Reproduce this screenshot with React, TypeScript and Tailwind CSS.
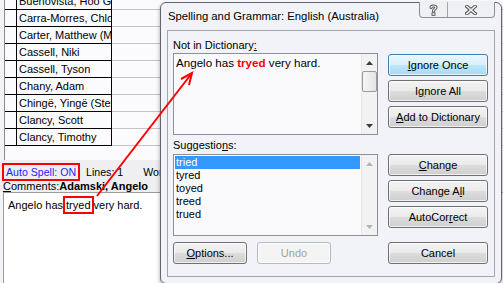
import type { ReactNode } from 'react';

const names = [
  'Buenovista, Hoo Geun',
  'Carra-Morres, Chloe',
  'Carter, Matthew (Matt)',
  'Cassell, Niki',
  'Cassell, Tyson',
  'Chany, Adam',
  'Chingë, Yingë (Stella)',
  'Clancy, Scott',
  'Clancy, Timothy',
];

const suggestions = ['tried', 'tyred', 'toyed', 'treed', 'trued'];

function NameGrid() {
  return (
    <div className="h-[160px] ml-[4px] border-l border-[#8c8c8c] bg-[#fbfbfe] overflow-hidden">
      <div className="-mt-[7px]">
        {names.map((n) => (
          <div key={n} className="flex h-[17px]">
            <div className="w-[12px] border-r border-b border-black" />
            <div className="w-[95px] border-r border-b border-black pl-[2px] leading-[16px] whitespace-nowrap overflow-hidden">
              {n}
            </div>
            <div className="flex-1 border-b border-[#c4c4c8]" />
          </div>
        ))}
      </div>
    </div>
  );
}

function MainWindow() {
  return (
    <div className="flex flex-col h-full">
      <NameGrid />
      <div className="h-[21px] bg-[#efeff2] flex items-start pt-[3px] pl-[2px] text-[10.6px] leading-[14px]">
        <span className="border-2 border-[#f00] px-[2px] text-[#2424ff]">Auto Spell: ON</span>
        <span className="ml-[6px] pt-[2px]">Lines: 1</span>
        <span className="ml-[20px] pt-[2px]">Words: 5</span>
      </div>
      <div className="h-[11px] bg-[#efeff2] pl-[3px] leading-[11px] whitespace-nowrap">
        <u className="underline-offset-1">C</u>omments:<b>Adamski, Angelo</b>
      </div>
      <div className="flex-1 ml-[3px] border-l border-t border-[#9c9c9c] bg-white pl-[4px] pt-[3px]">
        <div className="flex items-center whitespace-nowrap">
          Angelo has
          <span className="inline-block border-2 border-[#f00] px-[1px] py-[1px] leading-[12px]">tryed</span>
          very hard.
        </div>
      </div>
    </div>
  );
}

function ScrollBar({ thumb, disabled }: { thumb?: boolean; disabled?: boolean }) {
  const arrow = disabled ? '#b4b4b4' : '#3c3c3c';
  return (
    <div className="w-[16px] h-full border-l border-[#e6e6e6] bg-[#f2f2f3] flex flex-col">
      <div className="h-[17px] flex items-center justify-center">
        <svg width="7" height="4" viewBox="0 0 7 4">
          <path d="M0 4 L3.5 0 L7 4 Z" fill={arrow} />
        </svg>
      </div>
      {thumb && (
        <div className="h-[21px] w-[15px] border border-[#9a9a9a] rounded-[2px] bg-[linear-gradient(90deg,#f6f6f6,#e4e4e4)]" />
      )}
      <div className="flex-1" />
      <div className="h-[17px] flex items-center justify-center">
        <svg width="7" height="4" viewBox="0 0 7 4">
          <path d="M0 0 L3.5 4 L7 0 Z" fill={arrow} />
        </svg>
      </div>
    </div>
  );
}

function Btn({
  children,
  primary,
  disabled,
  wide,
}: {
  children: ReactNode;
  primary?: boolean;
  disabled?: boolean;
  wide?: boolean;
}) {
  let look =
    'border-[#707070] bg-[linear-gradient(#f3f3f3_0%,#ebebeb_48%,#dcdcdc_52%,#cfcfcf_100%)] text-black';
  if (primary)
    look =
      'border-[#3c7fb1] bg-[linear-gradient(#eaf6fd_0%,#d9f0fc_48%,#bee6fd_52%,#a7d9f5_100%)] text-black';
  if (disabled) look = 'border-[#b6b9bd] bg-[#f4f4f4] text-[#a2a2a2]';
  return (
    <div
      className={`${wide ? 'w-[100px]' : 'w-[74px]'} h-[22px] rounded-[3px] border shadow-[inset_0_0_0_1px_rgba(255,255,255,0.7)] flex items-center justify-center leading-[13px] ${look}`}
    >
      {children}
    </div>
  );
}

function HelpClose() {
  return (
    <div className="absolute right-[6px] top-[-1px] h-[16px] w-[76px] flex border border-t-0 border-[#8d8f94] rounded-b-[4px] bg-[#eef0f4]">
      <div className="w-[28px] border-r border-[#a2a5aa] flex items-center justify-center">
        <svg width="9" height="12" viewBox="0 0 9 12">
          <path
            d="M2 3.5 C2 1.5 7 1.5 7 3.5 C7 5 4.5 5.2 4.5 7.2"
            fill="none"
            stroke="#555"
            strokeWidth="3"
            strokeLinecap="round"
          />
          <path
            d="M2 3.5 C2 1.5 7 1.5 7 3.5 C7 5 4.5 5.2 4.5 7.2"
            fill="none"
            stroke="#eef0f4"
            strokeWidth="1.2"
            strokeLinecap="round"
          />
          <rect x="3" y="8.8" width="3" height="2.6" fill="#eef0f4" stroke="#555" strokeWidth="0.9" />
        </svg>
      </div>
      <div className="flex-1 flex items-center justify-center">
        <svg width="12" height="10" viewBox="0 0 12 10">
          <path d="M2 1.5 L10 8.5 M10 1.5 L2 8.5" stroke="#555" strokeWidth="3.6" strokeLinecap="square" />
          <path d="M2 1.5 L10 8.5 M10 1.5 L2 8.5" stroke="#eef0f4" strokeWidth="1.6" strokeLinecap="square" />
        </svg>
      </div>
    </div>
  );
}

function SpellingDialog() {
  return (
    <div className="absolute left-[160px] top-[2px] w-[342px] h-[282px] rounded-[6px] border border-[#646770] bg-[#f2f3f8] px-[6px] pb-[6px] flex flex-col shadow-[0_2px_4px_rgba(0,0,0,0.35)]">
      <HelpClose />
      <div className="h-[27px] flex items-center pl-[1px] text-[11.3px]">
        Spelling and Grammar: English (Australia)
      </div>
      <div className="flex-1 border border-[#a3a6ad] bg-[#f2f3f8] flex pl-[5px]">
        <div className="w-[205px] flex flex-col">
          <div className="mt-[8px] h-[13px] leading-[13px]">
            Not in Dictionary<u className="underline-offset-1">:</u>
          </div>
          <div className="mt-[1px] h-[82px] border border-[#8e9096] bg-[#fafafd] flex">
            <div className="flex-1 pl-[2px] pt-[2px] text-[11.6px] leading-[14px] whitespace-nowrap">
              Angelo has <b className="text-[#f00]">tryed</b> very hard.
            </div>
            <ScrollBar thumb />
          </div>
          <div className="mt-[4px] h-[13px] leading-[13px]">
            Suggestio<u className="underline-offset-1">n</u>s:
          </div>
          <div className="mt-[2px] h-[82px] border border-[#8e9096] bg-[#fafafd] flex">
            <div className="flex-1 pt-[1px] pl-[1px] pr-[1px]">
              {suggestions.map((s, i) => (
                <div
                  key={s}
                  className={`h-[13px] leading-[13px] pl-[1px] ${i === 0 ? 'bg-[#3399ff] text-white' : ''}`}
                >
                  {s}
                </div>
              ))}
            </div>
            <ScrollBar disabled />
          </div>
          <div className="mt-[6px] flex gap-[10px]">
            <Btn>
              <u className="underline-offset-1">O</u>ptions...
            </Btn>
            <Btn disabled>Undo</Btn>
          </div>
        </div>
        <div className="ml-[10px] w-[100px] pt-[23px] flex flex-col">
          <Btn wide primary>
            <u className="underline-offset-1">I</u>gnore Once
          </Btn>
          <div className="mt-[4px]">
            <Btn wide>
              I<u className="underline-offset-1">g</u>nore All
            </Btn>
          </div>
          <div className="mt-[4px]">
            <Btn wide>
              <u className="underline-offset-1">A</u>dd to Dictionary
            </Btn>
          </div>
          <div className="mt-[26px]">
            <Btn wide>
              <u className="underline-offset-1">C</u>hange
            </Btn>
          </div>
          <div className="mt-[4px]">
            <Btn wide>
              Change A<u className="underline-offset-1">l</u>l
            </Btn>
          </div>
          <div className="mt-[4px]">
            <Btn wide>
              AutoCor<u className="underline-offset-1">r</u>ect
            </Btn>
          </div>
          <div className="mt-[14px]">
            <Btn wide>Cancel</Btn>
          </div>
        </div>
      </div>
    </div>
  );
}

function Arrow() {
  return (
    <svg className="absolute left-0 top-0 pointer-events-none" width="503" height="283" viewBox="0 0 503 283">
      <path d="M97 196 L192 73" stroke="#f00" strokeWidth="2" fill="none" />
      <path d="M181 79 L192 73 L189 85" stroke="#f00" strokeWidth="2" fill="none" />
    </svg>
  );
}

export default function App() {
  return (
    <div className="relative w-[503px] h-[283px] overflow-hidden bg-[#f4f4f8] font-['Liberation_Sans',Arial,sans-serif] text-[11px] text-black">
      <MainWindow />
      <SpellingDialog />
      <Arrow />
    </div>
  );
}
